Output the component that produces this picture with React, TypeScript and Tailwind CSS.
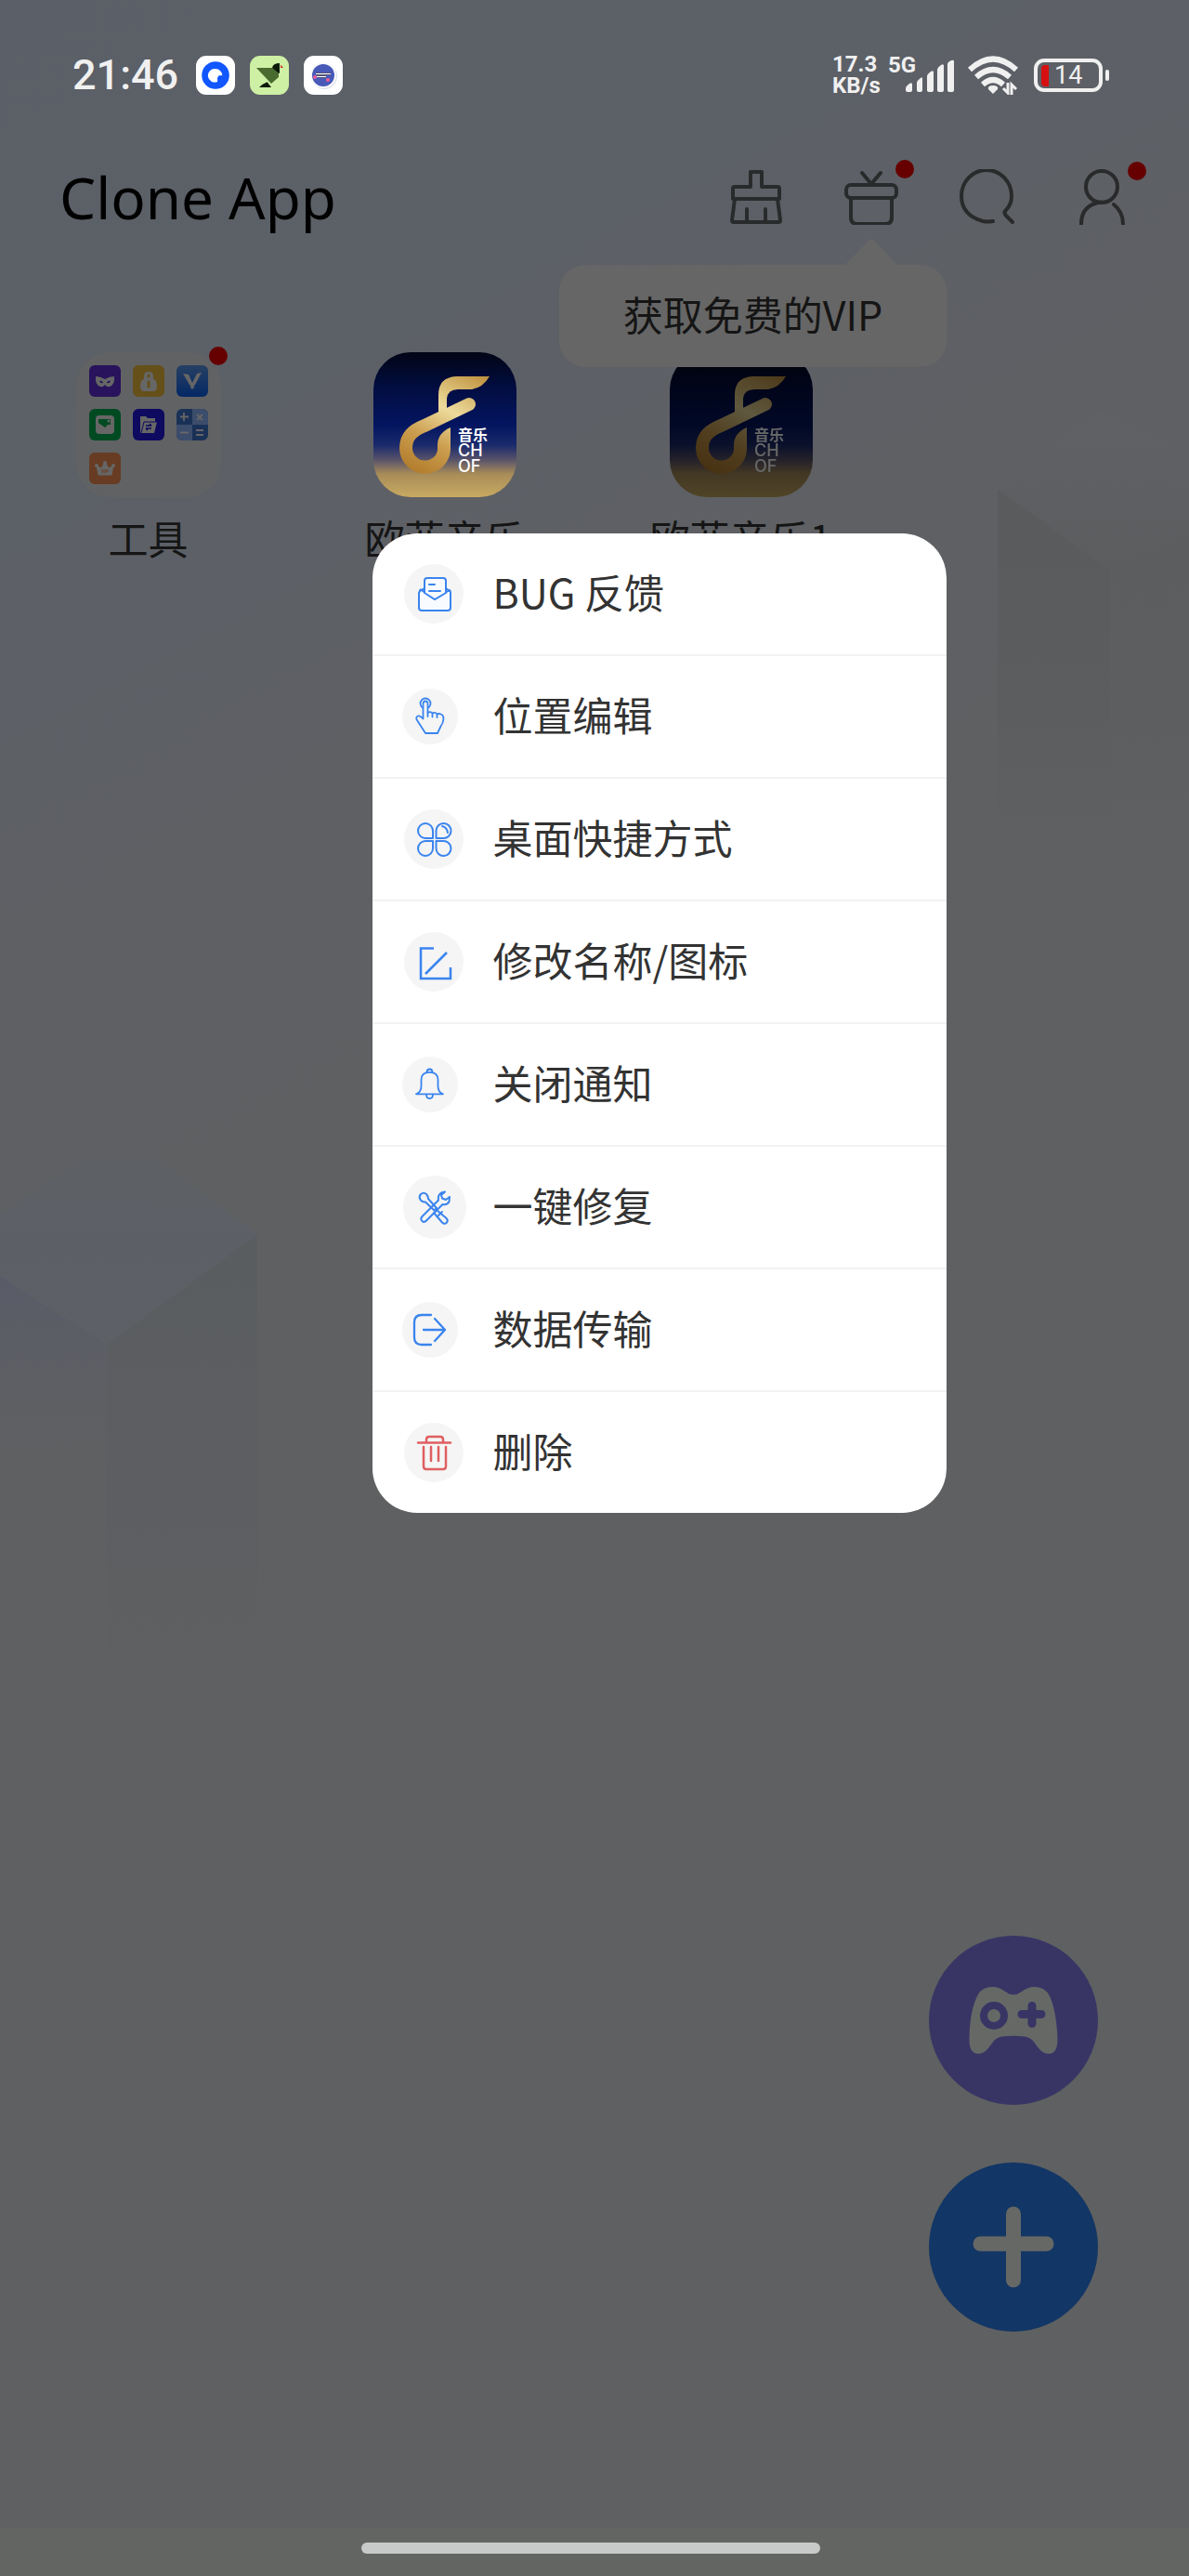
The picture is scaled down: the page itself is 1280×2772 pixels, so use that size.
import type { ReactNode } from "react";

function Wallpaper() {
  return (
    <svg
      className="pointer-events-none absolute inset-0 h-full w-full"
      viewBox="0 0 1280 2772"
      preserveAspectRatio="none"
      aria-hidden="true"
    >
      <defs>
        <linearGradient id="sky" x1="0" y1="0" x2="0.25" y2="1">
          <stop offset="0" stopColor="#5b5f67" />
          <stop offset="0.18" stopColor="#5c6067" />
          <stop offset="0.4" stopColor="#5f6063" />
          <stop offset="0.55" stopColor="#5f6061" />
          <stop offset="1" stopColor="#5f6061" />
        </linearGradient>
        <linearGradient id="topLeft" x1="0" y1="0" x2="0" y2="1">
          <stop offset="0" stopColor="#5d6065" stopOpacity="0.4" />
          <stop offset="0.5" stopColor="#5c6066" />
          <stop offset="1" stopColor="#5d6166" />
        </linearGradient>
        <linearGradient id="sideLeft" x1="0" y1="0" x2="0" y2="1">
          <stop offset="0" stopColor="#595c68" />
          <stop offset="1" stopColor="#5f6061" stopOpacity="0" />
        </linearGradient>
        <linearGradient id="frontLeft" x1="0" y1="0" x2="0" y2="1">
          <stop offset="0" stopColor="#5a5d60" />
          <stop offset="0.5" stopColor="#5d5e61" />
          <stop offset="1" stopColor="#5f6061" stopOpacity="0.4" />
        </linearGradient>
        <linearGradient id="topRight" x1="0" y1="0" x2="0" y2="1">
          <stop offset="0" stopColor="#606164" />
          <stop offset="1" stopColor="#5c5d5f" />
        </linearGradient>
        <linearGradient id="frontRight" x1="0" y1="0" x2="0" y2="1">
          <stop offset="0" stopColor="#5a5b5c" />
          <stop offset="0.5" stopColor="#5c5d5e" />
          <stop offset="1" stopColor="#5f6062" stopOpacity="0" />
        </linearGradient>
      </defs>
      <rect width="1280" height="2772" fill="url(#sky)" />
      <path d="M0 1307 130 1218 277 1328 115 1447 0 1373Z" fill="url(#topLeft)" />
      <path d="M0 1373 115 1447V1640H0Z" fill="url(#sideLeft)" />
      <path d="M277 1328V1910H115V1447Z" fill="url(#frontLeft)" />
      <path d="M1183 444 1280 490V575L1195 614 1074 526Z" fill="url(#topRight)" />
      <path d="M1074 526 1195 614V1010H1074Z" fill="url(#frontRight)" />
      <path d="M1195 614 1280 575V1010H1195Z" fill="url(#frontRight)" opacity="0.6" />
    </svg>
  );
}

function StatusBar() {
  return (
    <div className="flex h-[42px] items-center pl-[78px] pr-[86px] text-[#f0f0f0]">
      <span className="font-[Roboto,sans-serif] text-[45px] leading-[42px] font-medium">21:46</span>
      <div className="ml-auto flex items-center">
        <div className="w-[60px] font-[Roboto,sans-serif] text-[24px] leading-[23px] font-bold">
          <div>17.3</div>
          <div>KB/s</div>
        </div>
        <div className="relative h-[42px] w-[72px]">
          <span className="absolute top-0 left-0 font-[Roboto,sans-serif] text-[24px] leading-[20px] font-bold">
            5G
          </span>
          <svg className="absolute right-0 bottom-0" width="54" height="40" viewBox="0 0 54 40" fill="currentColor" aria-label="信号">
            <path d="M1 33q0-2 4-5q3-2 3 1v6q0 2-2 2H3q-2 0-2-2Z" />
            <path d="M13 27q0-2 4-5q2-2 2 1v12q0 2-2 2h-2q-2 0-2-2Z" />
            <path d="M24 20q0-2 4-5q3-2 3 1v19q0 2-2 2h-3q-2 0-2-2Z" />
            <path d="M35 13q0-2 4-5q3-2 3 1v26q0 2-2 2h-3q-2 0-2-2Z" />
            <path d="M46 7q0-2 4-4q3-1 3 1v31q0 2-2 2h-3q-2 0-2-2Z" />
          </svg>
        </div>
        <svg className="ml-[13px]" width="56" height="42" viewBox="0 0 56 42" aria-label="无线网络">
          <g fill="none" stroke="currentColor" strokeWidth="6">
            <path d="M3 15Q28-8 53 15" />
            <path d="M10 23Q28 7 46 23" />
            <path d="M17 31Q28 21 39 31" />
          </g>
          <path d="M28 32q6 0 5 4l-5 5-5-5q-1-4 5-4Z" fill="currentColor" />
          <path d="M44 29v11l-5-5M48 42V31l5 5" fill="none" stroke="currentColor" strokeWidth="3" />
        </svg>
        <div className="ml-[16px] flex items-center gap-[3px]">
          <div className="flex h-[36px] w-[74px] items-center rounded-[11px] border-4 border-[#f0f0f0] pl-[4px]">
            <span className="h-[23px] w-[8px] rounded-l-[4px] bg-[#d51010]" />
            <span className="ml-[6px] font-[Roboto,sans-serif] text-[27px] leading-[28px]">14</span>
          </div>
          <span className="h-[12px] w-[4px] rounded-full bg-[#f0f0f0]" />
        </div>
      </div>
    </div>
  );
}

function NotificationIcons() {
  return (
    <div className="absolute top-[60px] left-[211px] flex gap-4">
      <svg width="42" height="42" viewBox="0 0 42 42" aria-hidden="true">
        <rect width="42" height="42" rx="11" fill="#fff" />
        <circle cx="21" cy="21" r="14.8" fill="#1156ff" />
        <path d="M21 14a7.3 7.3 0 0 1 7.3 7.3h-3.6l-1.6 2.3v4.3A7.3 7.3 0 1 1 21 14Z" fill="#fff" />
      </svg>
      <svg width="42" height="42" viewBox="0 0 42 42" aria-hidden="true">
        <rect width="42" height="42" rx="11" fill="#cdf0a4" />
        <path d="M7 13h17l7 4v6l-8 7Z" fill="#4a6b2f" />
        <path d="M24 13q1-5 8-5v11l-2-1Z" fill="#0c1a0a" />
        <path d="M33 9.500 36 13h-3Z" fill="#d03a2a" />
        <path d="M10 34q4-4 9-6l4 6Z" fill="#0c1a0a" />
        <path d="m18 27 6 7" stroke="#cdf0a4" strokeWidth="1" />
      </svg>
      <svg width="42" height="42" viewBox="0 0 42 42" aria-hidden="true">
        <rect width="42" height="42" rx="11" fill="#fff" />
        <circle cx="22" cy="22" r="14" fill="#dfe1ea" />
        <circle cx="21" cy="21" r="14" fill="#fafafa" />
        <circle cx="21" cy="21" r="12" fill="#4859b8" />
        <path d="M13 19.500h16M14 22.500h10" stroke="#1b1b4a" strokeWidth="3.200" />
        <path d="M13 19.500h16M14 22.500h10" stroke="#fff" strokeWidth="1.400" />
        <circle cx="12" cy="23" r="2" fill="#ee5aa0" />
        <circle cx="26" cy="26" r="2" fill="#ee5a90" />
      </svg>
    </div>
  );
}

function Dot({ className }: { className: string }) {
  return <span className={`absolute size-5 rounded-full bg-[#660000] ${className}`} />;
}

function HeaderButton({ label, icon, children }: { label: string; icon: ReactNode; children?: ReactNode }) {
  return (
    <div className="relative size-[60px]">
      <button type="button" aria-label={label} className="block size-[60px]">
        <svg
          viewBox="0 0 60 60"
          className="size-full"
          fill="none"
          stroke="#292a2b"
          strokeWidth="4"
          strokeLinecap="round"
          strokeLinejoin="round"
        >
          {icon}
        </svg>
      </button>
      {children}
    </div>
  );
}

function Header() {
  return (
    <header className="relative z-10 flex h-[84px] items-center justify-between pr-[64px] pl-[64px]">
      <h1 className="font-['Noto_Sans',sans-serif] text-[62px] leading-[84px] font-normal text-black">Clone App</h1>
      <div className="flex gap-16">
        <HeaderButton
          label="清理"
          icon={
            <>
              <path d="M24 19V3h12v16h17q2 0 2 2v11H5V21q0-2 2-2Z" />
              <path d="M7 32 4 55q0 2 2 2h48q2 0 2-2L53 32M20 43v13M40 43v13" />
            </>
          }
        />
        <HeaderButton
          label="礼物"
          icon={
            <>
              <path d="M20 4 30 16 40 4" />
              <rect x="3" y="17" width="54" height="14" rx="5" />
              <path d="M8 32v20q0 7 7 7h30q7 0 7-7V32" />
            </>
          }
        >
          <Dot className="-top-[10px] right-[-16px]" />
          <div className="absolute top-[103px] -right-[51px] flex h-[110px] w-[417px] items-center justify-center rounded-[28px] bg-[#666666] pb-[5px] text-[43px] whitespace-nowrap text-[#151515]">
            <svg className="absolute -top-[28px] right-[52px]" width="58" height="29" viewBox="0 0 58 29" fill="#666666" aria-hidden="true">
              <path d="M0 29 26 2q3-3 6 0l26 27Z" />
            </svg>
            获取免费的VIP
          </div>
        </HeaderButton>
        <HeaderButton
          label="搜索"
          icon={<path d="M37 56Q31 57 26 56C12 52 3 43 3 29a26 27 0 0 1 54 0c0 6-2 11-6 15q-3 3 0 6l7 7" />}
        />
        <HeaderButton
          label="我的"
          icon={
            <>
              <ellipse cx="30" cy="19" rx="17" ry="17" />
              <path d="M8 59Q8 38 30 35.500M43 38q10 8 10 21" />
            </>
          }
        >
          <Dot className="-top-2 -right-[18px]" />
        </HeaderButton>
      </div>
    </header>
  );
}

function Mini({ children }: { children: ReactNode }) {
  return (
    <svg viewBox="0 0 34 34" className="size-[34px] overflow-hidden rounded-[6px]" aria-hidden="true">
      {children}
    </svg>
  );
}

function ToolsFolder() {
  const ink = "#666666";
  return (
    <div className="relative size-[156px]">
      <div className="grid size-full grid-cols-3 content-start gap-[13px] rounded-[36px] bg-[#616263] p-[14px]">
        <Mini>
          <rect width="34" height="34" fill="#28135c" />
          <path d="M7 12q5 0 10 3q5-3 10-3q1 9-5 11-3 1-5-2-2 3-5 2-6-2-5-11Z" fill={ink} />
          <path d="M11 17q3-1 4 2-3 1-4-2ZM23 17q-3-1-4 2 3 1 4-2Z" fill="#28135c" />
        </Mini>
        <Mini>
          <rect width="34" height="34" fill="#65501a" />
          <path d="M12 15v-3q0-5 5-5t5 5v3q4 1 4 7 0 6-4 6H12q-4 0-4-6 0-6 4-7Z" fill={ink} />
          <path d="M17 11v1M17 18v5" stroke="#65501a" strokeWidth="3" strokeLinecap="round" />
        </Mini>
        <Mini>
          <defs>
            <linearGradient id="v" x1="0" y1="0" x2="0" y2="1">
              <stop offset="0" stopColor="#274063" />
              <stop offset="1" stopColor="#042865" />
            </linearGradient>
          </defs>
          <rect width="34" height="34" fill="url(#v)" />
          <path d="m7 9 6 1 4 9 5-10 5-1-7 13-3 3-3-3Z" fill={ink} />
          <path d="m15 23 2 2 2-2" stroke={ink} strokeWidth="1.500" fill="none" />
        </Mini>
        <Mini>
          <rect width="34" height="34" fill="#004a22" />
          <rect x="7" y="7" width="20" height="20" rx="4" fill={ink} />
          <path d="M10 11h13v6h-3l-3 3-7-5Z" fill="#004a22" />
          <circle cx="21" cy="13" r="1.500" fill={ink} />
        </Mini>
        <Mini>
          <rect width="34" height="34" fill="#0d0a60" />
          <path d="M8 26V8h6l2 2h8v4h2L23 26Z" fill={ink} />
          <path d="m9 26 3-12h14" stroke="#0d0a60" fill="none" />
          <path d="M14 18h6M14 21h6m-2-5 2 2m-6 3 2 2" stroke="#0d0a60" strokeWidth="1.500" fill="none" />
        </Mini>
        <Mini>
          <rect width="34" height="34" fill="#1a3157" />
          <path d="M17 0h17v17H17ZM0 17h17v17H0Z" fill="#3b4d6b" />
          <path d="M8 4v9M4 8.500h9M22 6l6 6M28 6l-6 6M4 25.500h9M21 23h8M21 28h8" stroke={ink} strokeWidth="1.800" />
        </Mini>
        <Mini>
          <rect width="34" height="34" fill="#673c23" />
          <path d="m8 14 5 3 4-7 4 7 5-3-2 10H10Z" fill={ink} stroke={ink} strokeLinejoin="round" />
          <circle cx="8" cy="14" r="2" fill={ink} />
          <circle cx="17" cy="11" r="2" fill={ink} />
          <circle cx="26" cy="14" r="2" fill={ink} />
          <text x="17" y="22" textAnchor="middle" fontSize="5" fontWeight="700" fontFamily="Roboto" fill="#673c23">VIP</text>
        </Mini>
      </div>
      <Dot className="-top-[6px] -right-[7px]" />
    </div>
  );
}

function MusicLogo({ id, className }: { id: string; className?: string }) {
  return (
    <svg viewBox="0 0 156 156" className={`size-[156px] ${className ?? ""}`} aria-hidden="true">
      <defs>
        <linearGradient id={`${id}-bg`} x1="0" y1="0" x2="0" y2="1">
          <stop offset="0" stopColor="#010515" />
          <stop offset="0.25" stopColor="#020d42" />
          <stop offset="0.5" stopColor="#031560" />
          <stop offset="0.64" stopColor="#1a2a6c" />
          <stop offset="0.74" stopColor="#57526a" />
          <stop offset="0.84" stopColor="#a88c58" />
          <stop offset="1" stopColor="#c9aa62" />
        </linearGradient>
        <linearGradient id={`${id}-gold`} gradientUnits="userSpaceOnUse" x1="110" y1="20" x2="50" y2="132">
          <stop offset="0" stopColor="#c0923f" />
          <stop offset="0.4" stopColor="#eddb9c" />
          <stop offset="0.7" stopColor="#cb9d4e" />
          <stop offset="1" stopColor="#b27c2c" />
        </linearGradient>
      </defs>
      <rect x="1" width="154" height="156" rx="40" fill={`url(#${id}-bg)`} />
      <g fill={`url(#${id}-gold)`}>
        <path d="M126 26H90Q71 27 71 46V67L80 62V50Q81 40 92 40H107Q119 38 126 26Z" />
        <path d="M84 81Q70 87 70 100V103H84Z" />
      </g>
      <path
        d="M104 56 56 79C44 84 36 90 36 103A20.500 20.500 0 0 0 57 123.500 20 20 0 0 0 77 102"
        fill="none"
        stroke={`url(#${id}-gold)`}
        strokeWidth="14"
        strokeLinecap="round"
      />
      <g fill="#fff" fontFamily="'Noto Sans CJK SC', sans-serif">
        <text x="92" y="95" fontSize="16" fontWeight="700">音乐</text>
        <text x="92" y="112" fontSize="18" fontWeight="500" fontFamily="Inter">CH</text>
        <text x="92" y="129" fontSize="18" fontWeight="500" fontFamily="Inter">OF</text>
      </g>
    </svg>
  );
}

const blue = "#3a84ee";

const menu: { label: string; cx: number; r: number; icon: ReactNode; color?: string; width?: number }[] = [
  {
    label: "BUG 反馈",
    cx: 34,
    r: 32,
    icon: (
      <>
        <path fill="#f8fbff" d="M19 32q0-1 1-1.500L35 41l16-10q1 1 1 3v16q0 3-3 3H21q-3 0-3-3V34Z" />
        <path fill="#f8fbff" d="M24 34V21q0-3 3-3h17q3 0 3 3v13l-12 7Z" />
        <path d="m24 29-5 3M47 29l4 3M29 25h6M29 32h12" />
      </>
    ),
  },
  {
    label: "位置编辑",
    cx: 30,
    r: 30,
    width: 1.8,
    icon: (
      <>
        <circle cx="25" cy="21" r="5.500" />
        <path
          fill="#f5f5f5"
          d="M22.500 36V21.500q0-3 2.500-3t2.500 3V31q3-2 5 .5 3-1.500 5 1 2-1 4 0 3 1 3 5-.5 5-3 8L38 53H25L16 39q-2-3 1-4.500 2-1 5.500 3Z"
        />
        <path d="M27.500 31v4M32.500 32v3.500M37.500 33v3" />
      </>
    ),
  },
  {
    label: "桌面快捷方式",
    cx: 34,
    r: 32,
    icon: (
      <>
        <path d="M33 34h-8a8 8 0 1 1 8-8ZM36.500 34h7.500a8 8 0 1 0-7.500-8ZM33 37v8a8 8 0 1 1-8-8ZM36.500 37v8a8 8 0 1 0 7.500-8Z" />
        <path d="M43 21q5 1 6 7" />
      </>
    ),
  },
  {
    label: "修改名称/图标",
    cx: 34,
    r: 32,
    width: 2.5,
    icon: <path strokeLinecap="butt" strokeLinejoin="miter" d="M34 20.500H20V53H52V41M25 48 48 25" />,
  },
  {
    label: "关闭通知",
    cx: 30,
    r: 30,
    width: 1.8,
    icon: (
      <>
        <path d="M26.500 22q0-3.500 3-3.500t3 3.500M15 45.300q5.500-2 5.500-8.500v-7q0-8 9-8t9 8v7q0 6.500 5.500 8.500Z" />
        <path d="M26 46q0 4 3.500 4t3.500-4" />
      </>
    ),
  },
  {
    label: "一键修复",
    cx: 35,
    r: 34,
    width: 2,
    icon: (
      <>
        <path d="M19.500 27q-2-3 .5-6 3-2.500 6 0 2 2 2 5l9 10-2.500 2.500-9.500-9q-3 .5-5.500-2.500Z" />
        <path d="m37 38 10 8.500q3 2.500 1 5-2.500 2.500-5 0L34 41" />
        <path d="m46 18.500-4 1q-4 3-3 8L21.500 45q-2.500 3 0 5 2 2 4.500-.5L43.500 32q5 1 7-3l.5-5-4 3-4-1.500-1-3.500Z" />
        <path d="m39 44 4-4" />
      </>
    ),
  },
  {
    label: "数据传输",
    cx: 30,
    r: 30,
    width: 2.3,
    icon: <path d="M31 19H21q-8 0-8 8v16q0 8 8 8h10M23 35h23M35 23l11 12-11 12" />,
  },
  {
    label: "删除",
    cx: 34,
    r: 32,
    color: "#df5f61",
    width: 2.5,
    icon: <path d="M17 24.500h35M26 24v-3q0-3 3-3h12q3 0 3 3v3M23 29v21q0 3 3 3h18q3 0 3-3V29M31 29v15M39 29v15" />,
  },
];

function ContextMenu() {
  return (
    <ul className="absolute top-[195px] left-0 z-20 w-[618px] divide-y-2 divide-[#f2f2f2] overflow-hidden rounded-[48px] bg-white">
      {menu.map((item) => (
        <li key={item.label}>
          <button
            type="button"
            className="flex h-[130px] w-full items-center gap-7 pl-8 text-[43px] leading-[56px] text-[#333333]"
          >
            <svg
              viewBox="0 0 70 70"
              className="size-[70px]"
              fill="none"
              stroke={item.color ?? blue}
              strokeWidth={item.width ?? 2}
              strokeLinecap="round"
              strokeLinejoin="round"
              aria-hidden="true"
            >
              <circle cx={item.cx} cy="35" r={item.r} fill="#f5f5f5" stroke="none" />
              {item.icon}
            </svg>
            <span className="pb-[6px]">{item.label}</span>
          </button>
        </li>
      ))}
    </ul>
  );
}

function AppTile({ label, children }: { label: string; children: ReactNode }) {
  return (
    <div className="flex flex-col items-center gap-[15px]">
      {children}
      <span className="text-[43px] leading-[56px] whitespace-nowrap text-[#151515]">{label}</span>
    </div>
  );
}

export default function App() {
  return (
    <main className="relative flex min-h-screen w-full flex-col overflow-hidden bg-[#5f6061] pt-[60px] font-['Noto_Sans_CJK_SC',sans-serif]">
      <Wallpaper />
      <div className="relative flex flex-1 flex-col">
        <StatusBar />
        <div className="h-[68px]" />
        <Header />
        <section className="mt-[125px] grid grid-cols-4 pr-1">
          <AppTile label="工具">
            <ToolsFolder />
          </AppTile>
          <AppTile label="欧菲音乐">
            <div className="relative">
              <MusicLogo id="music" />
              <ContextMenu />
            </div>
          </AppTile>
          <AppTile label="欧菲音乐1">
            <MusicLogo id="music-copy" className="brightness-[.4]" />
          </AppTile>
        </section>
        <div className="mt-auto mr-[98px] mb-[211px] flex flex-col gap-[62px] self-end pt-[1200px]">
          <button type="button" aria-label="游戏" className="size-[182px] rounded-full bg-[#383565]">
            <svg viewBox="0 0 182 182" className="size-full">
              <path
                fill="#666866"
                d="M53 63Q58 55 69 55 75 55 82 60 91 67 100 60 107 55 114 55 125 55 130 65 137 80 138.500 110 139 127 129 127 123 127 118 121L112 113Q108 109 103 108.500 91 107 79 108.500 74 109 70 113L64 121Q59 127 53 127 43 127 43.500 110 44 80 53 63Z"
              />
              <circle cx="70" cy="86" r="11" fill="none" stroke="#383565" strokeWidth="8" />
              <path d="M100 84.500h21M111 75.500v19" stroke="#383565" strokeWidth="9" strokeLinecap="round" />
            </svg>
          </button>
          <button type="button" aria-label="添加" className="size-[182px] rounded-full bg-[#123665]">
            <svg viewBox="0 0 182 182" className="size-full">
              <path d="M91 55.500v71M55.500 87.500h71" stroke="#666866" strokeWidth="16" strokeLinecap="round" />
            </svg>
          </button>
        </div>
      </div>
      <NotificationIcons />
      <footer className="relative flex h-[52px] justify-center bg-[#636562] pt-4 pr-2">
        <span className="h-[12px] w-[494px] rounded-full bg-[#c8cac9]" />
      </footer>
    </main>
  );
}
